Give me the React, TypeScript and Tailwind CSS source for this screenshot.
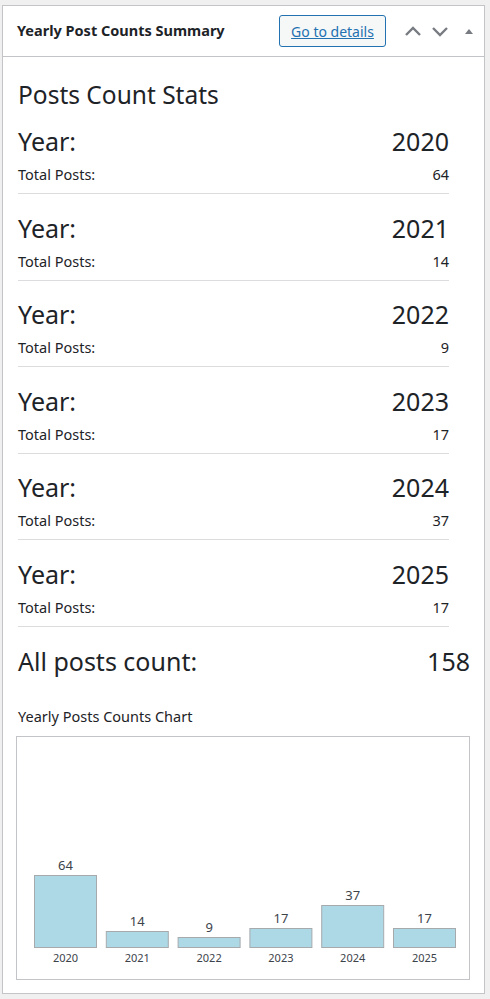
import React from 'react';

const stats = [
  { year: 2020, total: 64 },
  { year: 2021, total: 14 },
  { year: 2022, total: 9 },
  { year: 2023, total: 17 },
  { year: 2024, total: 37 },
  { year: 2025, total: 17 },
];

const font = { fontFamily: '"Noto Sans", "Open Sans", sans-serif' };

function StatRow({ year, total, first }: { year: number; total: number; first: boolean }) {
  return (
    <div className={first ? 'mt-[13px] border-b border-[#dcdcde] pb-[9px]' : 'mt-[16.6px] border-b border-[#dcdcde] pb-[9px]'}>
      <div className="flex justify-between text-[25px] leading-[34px] text-[#1d2327]">
        <span>Year:</span>
        <span>{year}</span>
      </div>
      <div className="mt-[6px] flex justify-between text-[14.5px] leading-[20px] text-[#1d2327]">
        <span>Total Posts:</span>
        <span>{total}</span>
      </div>
    </div>
  );
}

function Chart() {
  const scale = 1.125;
  const baseY = 210;
  return (
    <div className="ml-[-2px] mt-[10px] h-[244px] border border-[#c3c4c7] bg-white">
      <svg width="453" height="242" viewBox="0 0 453 242">
        {stats.map((s, i) => {
          const x = 17.5 + i * 71.8;
          const h = Math.round(s.total * scale);
          return (
            <g key={s.year}>
              <rect
                x={x}
                y={baseY - h + 0.5}
                width={62}
                height={h}
                fill="#add8e6"
                stroke="#a7aaad"
                strokeWidth={1}
              />
              <text
                x={x + 31}
                y={baseY - h - 5}
                textAnchor="middle"
                fontSize="13"
                fill="#3c434a"
                style={font}
              >
                {s.total}
              </text>
              <text
                x={x + 31}
                y={225}
                textAnchor="middle"
                fontSize="11"
                fill="#3c434a"
                style={font}
              >
                {s.year}
              </text>
            </g>
          );
        })}
      </svg>
    </div>
  );
}

export default function App() {
  const total = stats.reduce((sum, s) => sum + s.total, 0);

  return (
    <div className="min-h-[999px] bg-[#f0f0f1] pl-[2px] pr-[5px] pt-[5px]" style={font}>
      <div className="border border-[#c3c4c7] bg-white">
        {/* Header */}
        <div className="flex h-[51px] items-center border-b border-[#c3c4c7] pl-[14px] pr-[7px]">
          <h2 className="flex-1 text-[14.5px] font-bold text-[#1d2327]">Yearly Post Counts Summary</h2>
          <a
            href="#"
            className="mr-[18px] flex h-[32px] w-[107px] items-center justify-center rounded-[3px] border border-[#2271b1] bg-[#f6f7f7] text-[14px] text-[#2271b1] underline"
          >
            Go to details
          </a>
          <div className="flex items-center gap-[9px] text-[#787c82]">
            <svg width="18" height="18" viewBox="0 0 18 18">
              <path d="M2 13 L9 6 L16 13" fill="none" stroke="currentColor" strokeWidth="2.4" />
            </svg>
            <svg width="18" height="18" viewBox="0 0 18 18">
              <path d="M2 6 L9 13 L16 6" fill="none" stroke="currentColor" strokeWidth="2.4" />
            </svg>
            <svg width="16" height="18" viewBox="0 0 16 18" className="ml-[3px]">
              <path d="M4 12 L8 7 L12 12 Z" fill="currentColor" />
            </svg>
          </div>
        </div>

        {/* Body */}
        <div className="pb-[13px] pl-[15px] pr-[14px] pt-[22px]">
          <div className="mr-[21px]">
            <h3 className="text-[24.5px] leading-[32px] text-[#1d2327]">Posts Count Stats</h3>
            {stats.map((s, i) => (
              <StatRow key={s.year} year={s.year} total={s.total} first={i === 0} />
            ))}
          </div>

          <div className="mt-[17px] flex justify-between text-[25px] leading-[34px] text-[#1d2327]">
            <span>All posts count:</span>
            <span>{total}</span>
          </div>

          <div className="mt-[28px] text-[14.5px] leading-[20px] text-[#1d2327]">Yearly Posts Counts Chart</div>
          <Chart />
        </div>
      </div>
    </div>
  );
}
